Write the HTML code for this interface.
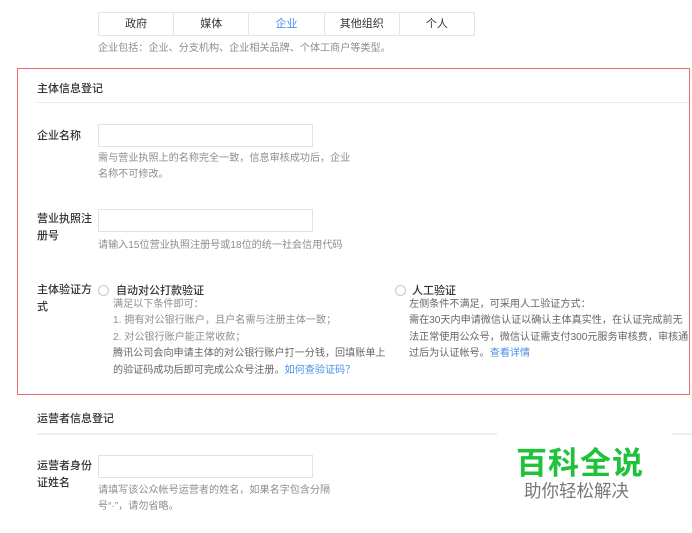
<!DOCTYPE html>
<html><head><meta charset="utf-8"><style>
*{margin:0;padding:0;box-sizing:border-box}
body{width:692px;height:533px;background:#fff;position:relative;overflow:hidden;font-family:"Liberation Sans","Noto Sans CJK SC",sans-serif;font-size:11px;color:#333}
.a{position:absolute;white-space:nowrap}
.g{color:#8d8d8d;font-size:10.1px}
.b{color:#4a8ee8}
.tabs{position:absolute;left:98px;top:12px;width:377px;height:24px;border:1px solid #e4e4e4;display:flex}
.tabs div{flex:1;border-right:1px solid #e4e4e4;text-align:center;line-height:22px;font-size:11px;color:#333}
.tabs div.b{color:#4a8ee8}
.tabs div:last-child{border-right:none}
.inp{position:absolute;left:98px;width:215px;height:23px;border:1px solid #e2e2e2}
.hr{position:absolute;height:1px;background:#e8e8e8}
.radio{position:absolute;width:11px;height:11px;border:1px solid #c8c8c8;border-radius:50%}
.lab{font-size:11px;color:#333;font-weight:500}
</style></head><body>
<div class="tabs"><div>政府</div><div>媒体</div><div class="b">企业</div><div>其他组织</div><div>个人</div></div>
<div class="a g" style="left:98px;top:39px">企业包括：企业、分支机构、企业相关品牌、个体工商户等类型。</div>
<div style="position:absolute;left:17px;top:68px;width:673px;height:327px;border:1px solid #f06a6a"></div>
<div class="a lab" style="left:37px;top:80px">主体信息登记</div>
<div class="hr" style="left:37px;top:102px;width:652px"></div>
<div class="a lab" style="left:37px;top:127px">企业名称</div>
<div class="inp" style="top:124px"></div>
<div class="a g" style="left:98px;top:151px;line-height:16px">需与营业执照上的名称完全一致，信息审核成功后，企业<br>名称不可修改。</div>
<div class="a lab" style="left:37px;top:211px;line-height:17px">营业执照注<br>册号</div>
<div class="inp" style="top:209px"></div>
<div class="a g" style="left:98px;top:236px">请输入15位营业执照注册号或18位的统一社会信用代码</div>
<div class="a lab" style="left:37px;top:282px;line-height:17px">主体验证方<br>式</div>
<div class="radio" style="left:98px;top:285px"></div>
<div class="a lab" style="left:116px;top:282px">自动对公打款验证</div>
<div class="a g" style="left:113px;top:297px;line-height:16.4px">满足以下条件即可：<br>1. 拥有对公银行账户，且户名需与注册主体一致；<br>2. 对公银行账户能正常收款；<br><span style="color:#666">腾讯公司会向申请主体的对公银行账户打一分钱，回填账单上<br>的验证码成功后即可完成公众号注册。</span><span class="b">如何查验证码？</span></div>
<div class="radio" style="left:395px;top:285px"></div>
<div class="a lab" style="left:412px;top:282px">人工验证</div>
<div class="a g" style="left:409px;top:297px;line-height:16.4px;color:#666">左侧条件不满足，可采用人工验证方式：<br>需在30天内申请微信认证以确认主体真实性，在认证完成前无<br>法正常使用公众号，微信认证需支付300元服务审核费，审核通<br>过后为认证帐号。<span class="b">查看详情</span></div>
<div class="a lab" style="left:37px;top:410px">运营者信息登记</div>
<div class="hr" style="left:37px;top:433px;width:460px;background:#eee;height:2px"></div>
<div class="hr" style="left:672px;top:433px;width:20px;background:#eee;height:2px"></div>
<div class="a lab" style="left:37px;top:458px;line-height:17px">运营者身份<br>证姓名</div>
<div class="inp" style="top:455px"></div>
<div class="a g" style="left:98px;top:483px;line-height:16px">请填写该公众帐号运营者的姓名，如果名字包含分隔<br>号“·”，请勿省略。</div>
<div class="a" style="left:516px;top:438px;font-size:31px;font-weight:bold;color:#1fc23a;letter-spacing:1px">百科全说</div>
<div class="a" style="left:524px;top:478px;font-size:17.5px;color:#777">助你轻松解决</div>
</body></html>
